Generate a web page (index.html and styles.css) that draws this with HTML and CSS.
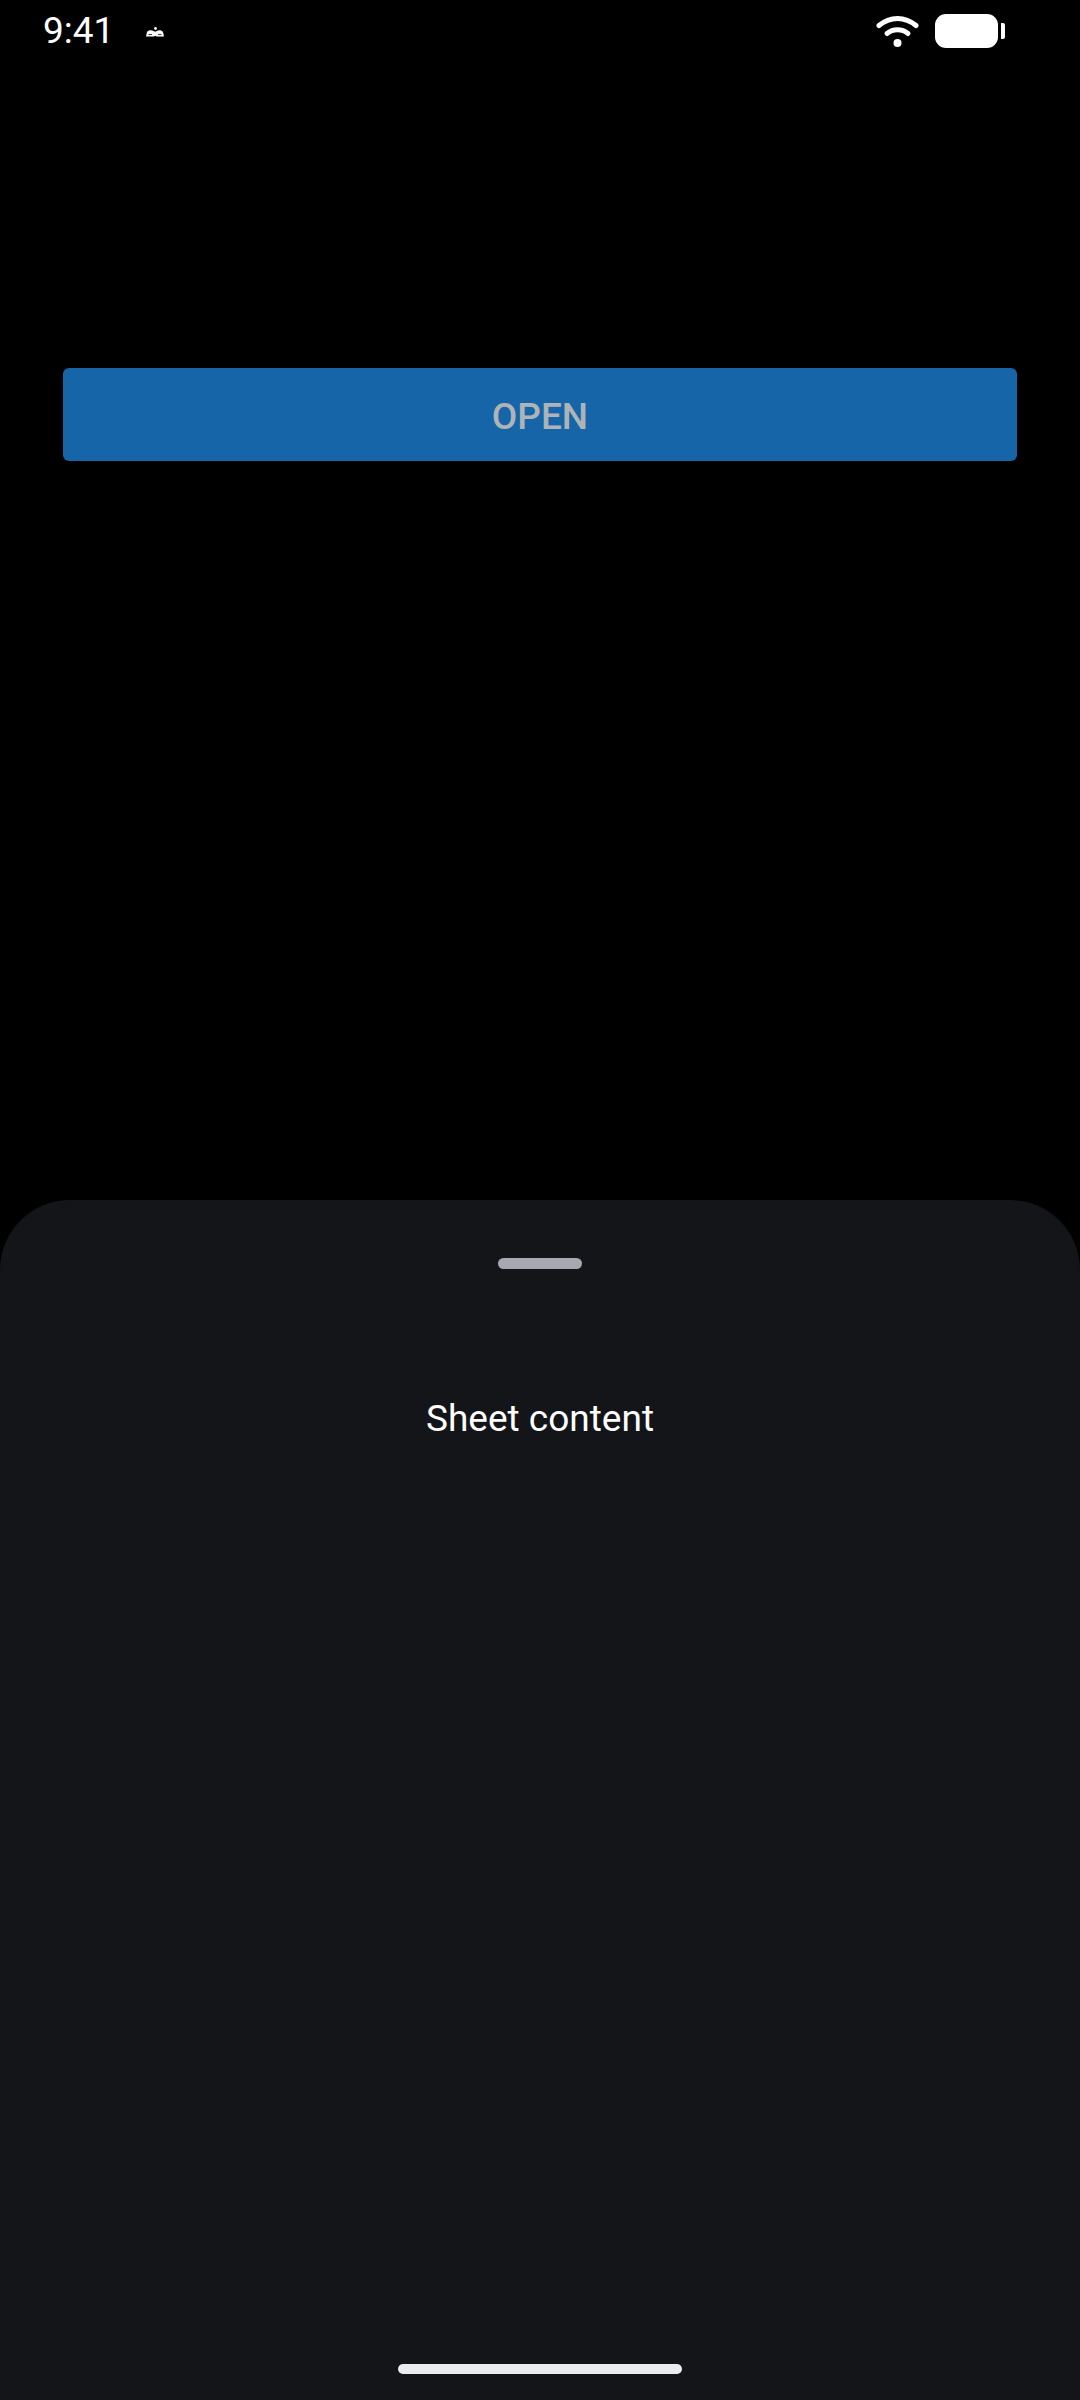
FILE: index.html
```html
<!DOCTYPE html>
<html lang="en">
<head>
    <meta charset="UTF-8">
    <meta name="viewport" content="width=device-width, initial-scale=1.0">
    <title>Sheet</title>
    <link rel="stylesheet" href="styles.css">
</head>
<body>
    <div class="status-bar">
        <div class="status-left">
            <span class="clock">9:41</span>
            <svg class="notif-icon" width="18" height="10" viewBox="0 0 18 10">
                <circle fill="#fff" cx="9.500" cy="1.500" r="1.400"/>
                <path fill="#fff" d="M0 9.500 1 5C2.500 3 5.500 2.800 8.500 4.500H10C12.500 2.800 15.500 3 17 5L18 9.500H10.500L9.300 8.700 8 9.500z"/>
                <path fill="#000" d="M2.500 7h3.500v.8H2.500zM12 7h3.500v.8H12z"/>
            </svg>
        </div>
        <div class="status-right">
            <svg class="wifi-icon" width="43" height="32" viewBox="0 0 43 32">
                <path fill="none" stroke="#fff" stroke-width="5" stroke-linecap="round" d="M3 10.500C14 1 29 1 40 10.500"/>
                <path fill="none" stroke="#fff" stroke-width="5" stroke-linecap="round" d="M11 18.500C17 13.500 26 13.500 32 18.500"/>
                <circle fill="#fff" cx="21.500" cy="28" r="4"/>
            </svg>
            <div class="battery"></div>
            <div class="battery-nub"></div>
        </div>
    </div>

    <div class="main">
        <button class="open-btn">OPEN</button>
    </div>

    <div class="sheet">
        <div class="handle"></div>
        <p class="sheet-text">Sheet content</p>
        <div class="home-bar"></div>
    </div>
</body>
</html>
```

FILE: styles.css
```css
html, body {
    margin: 0;
    height: 100%;
}
body {
    display: flex;
    flex-direction: column;
    height: 2400px;
    background-color: #000;
    color: #fff;
    font-family: Roboto, sans-serif;
    overflow: hidden;
}
.status-bar {
    display: flex;
    justify-content: space-between;
    align-items: center;
    height: 62px;
    padding: 0 75px 0 43px;
}
.status-left {
    display: flex;
    align-items: center;
    gap: 32px;
}
.clock {
    font-size: 37px;
    line-height: 62px;
}
.notif-icon {
    margin-top: 2px;
}
.status-right {
    display: flex;
    align-items: center;
}
.wifi-icon {
    margin-right: 16px;
}
.battery {
    width: 63px;
    height: 34px;
    background-color: #fff;
    border-radius: 11px;
}
.battery-nub {
    width: 4px;
    height: 16px;
    margin-left: 3px;
    background-color: #fff;
    border-radius: 0 2px 2px 0;
}
.main {
    flex: 1;
    padding: 306px 63px 0;
}
.open-btn {
    display: block;
    width: 100%;
    height: 93px;
    padding: 3px 0 0;
    border: 0;
    border-radius: 6px;
    background-color: #1565a8;
    color: #aeb3b8;
    font-family: Roboto, sans-serif;
    font-size: 37px;
    font-weight: 500;
}
.sheet {
    display: flex;
    flex-direction: column;
    align-items: center;
    height: 1200px;
    background-color: #131519;
    border-radius: 70px 70px 0 0;
}
.handle {
    width: 84px;
    height: 11px;
    margin-top: 58px;
    background-color: #a8a8b0;
    border-radius: 6px;
}
.sheet-text {
    margin: 128px 0 0;
    font-size: 37px;
    line-height: 44px;
}
.home-bar {
    width: 284px;
    height: 10px;
    margin-top: auto;
    margin-bottom: 26px;
    background-color: #ebecee;
    border-radius: 5px;
}
```
